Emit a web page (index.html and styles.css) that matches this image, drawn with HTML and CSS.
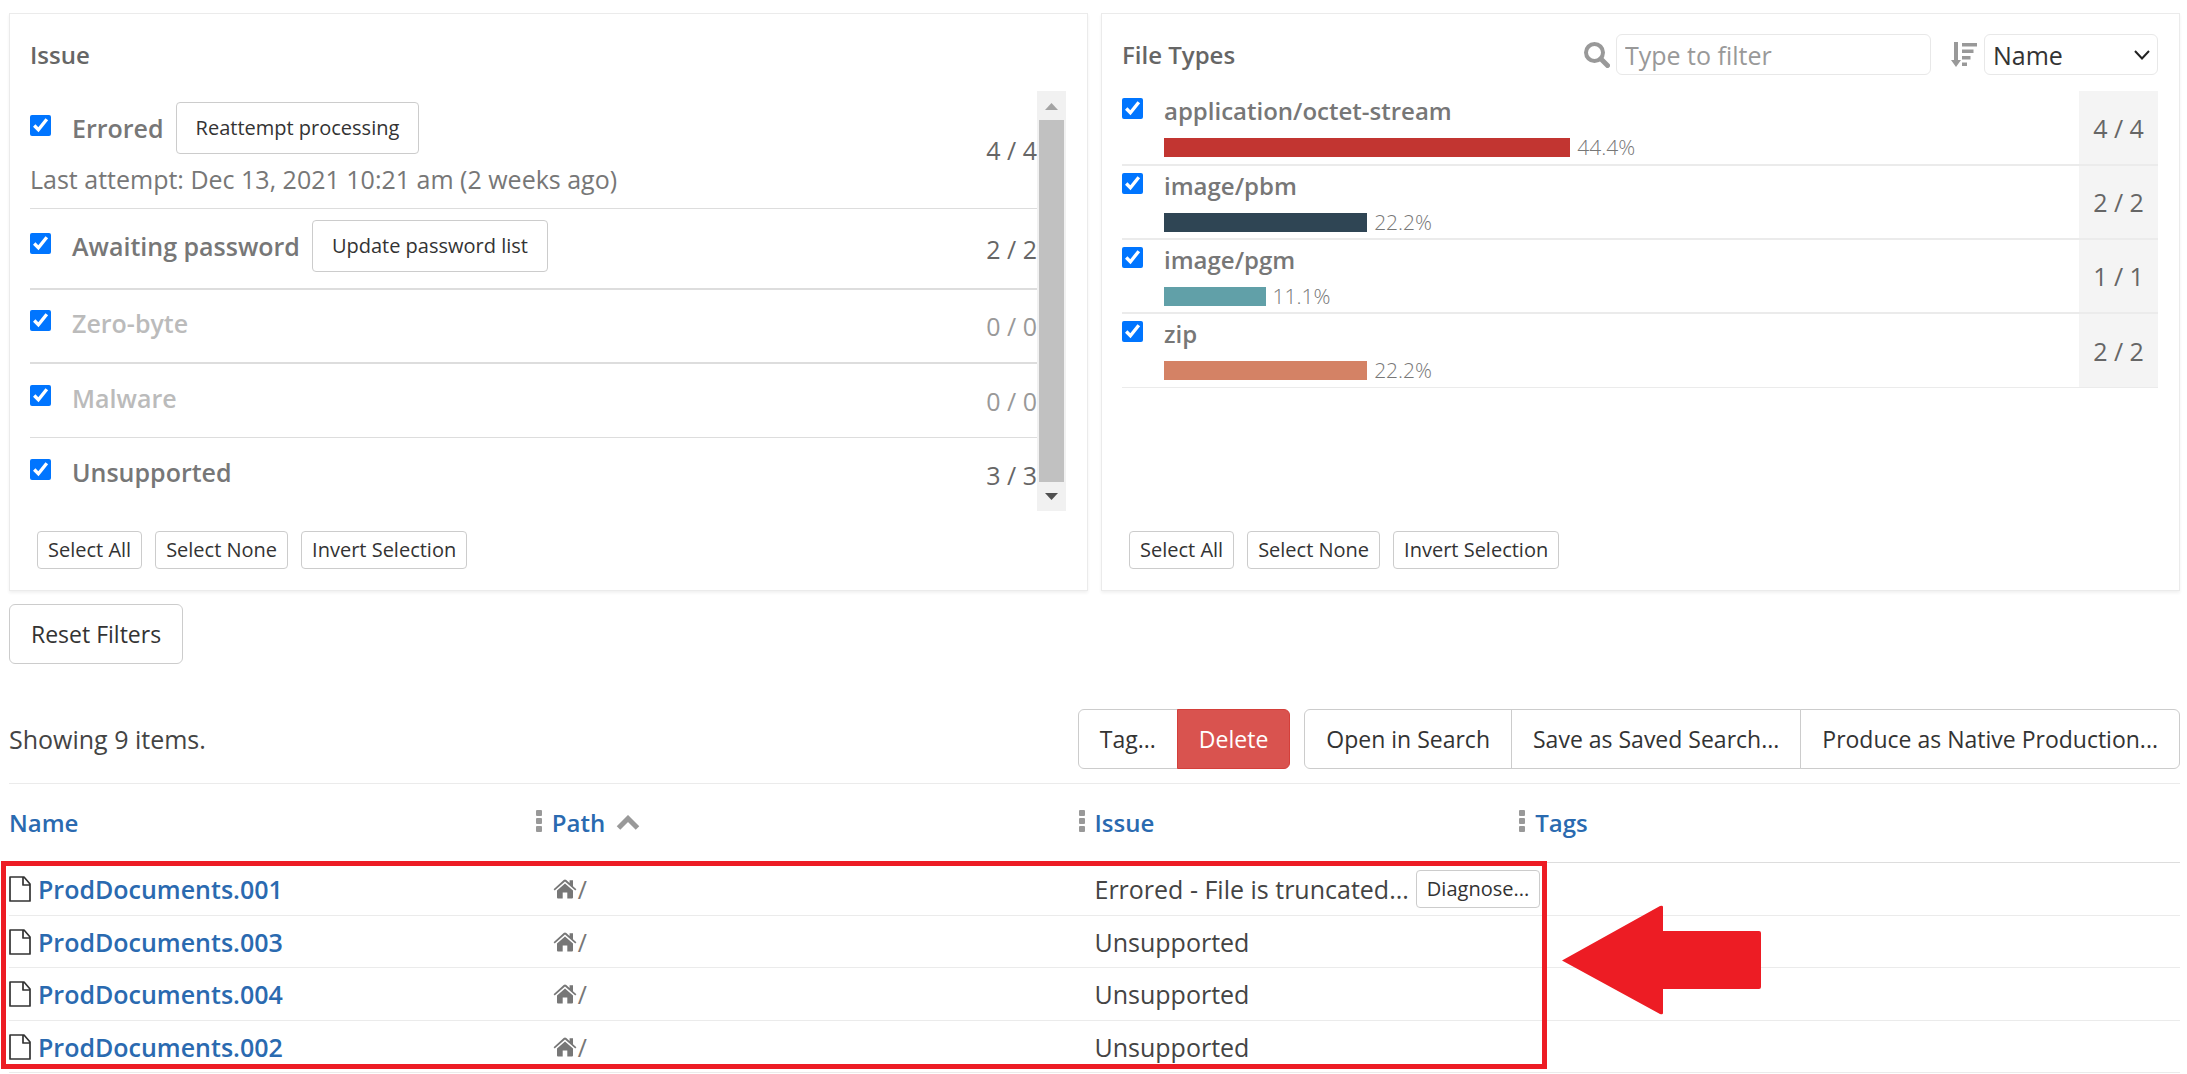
FILE: index.html
```html
<!DOCTYPE html>
<html lang="en">
<head>
    <meta charset="UTF-8">
    <meta name="viewport" content="width=device-width, initial-scale=1.0">
    <title>Processing issues</title>
    <link rel="stylesheet" href="styles.css">
</head>
<body>
    <!-- shared icons -->
    <svg class="sprite" aria-hidden="true">
        <symbol id="icon-file" viewBox="0 0 22 26">
            <path d="M1 1H15L21 8V25H1Z M14 1V9H21" fill="none" stroke="#333" stroke-width="1.7" stroke-linejoin="round"/>
        </symbol>
        <symbol id="icon-home" viewBox="0 0 24 20">
            <path d="M12 4.6L20 11.6V18.4Q20 19.4 19 19.4H14.3V13.4H9.7V19.4H5Q4 19.4 4 18.4V11.6Z"/>
            <path d="M0.6 10.2L10.7 1Q12 0 13.3 1L16.6 4V1.2H20V7.2L23.4 10.2L22.3 11.5L12 2.6L1.7 11.5Z"/>
        </symbol>
        <symbol id="icon-dots" viewBox="0 0 6 22">
            <rect width="6" height="6" rx="1"/>
            <rect y="8" width="6" height="6" rx="1"/>
            <rect y="16" width="6" height="6" rx="1"/>
        </symbol>
    </svg>

    <div class="filters">
        <section class="panel">
            <div class="panel-header">
                <h2 class="panel-title">Issue</h2>
            </div>
            <div class="panel-body issue-body">
                <ul class="issue-list">
                    <li class="issue-row">
                        <div class="issue-info">
                            <div class="issue-line">
                                <input type="checkbox" id="errored" checked>
                                <label for="errored">Errored</label>
                                <button type="button" class="btn btn-medium">Reattempt processing</button>
                            </div>
                            <div class="issue-note">Last attempt: Dec 13, 2021 10:21 am (2 weeks ago)</div>
                        </div>
                        <span class="count">4 / 4</span>
                    </li>
                    <li class="issue-row">
                        <div class="issue-line">
                            <input type="checkbox" id="password" checked>
                            <label for="password">Awaiting password</label>
                            <button type="button" class="btn btn-medium">Update password list</button>
                        </div>
                        <span class="count">2 / 2</span>
                    </li>
                    <li class="issue-row empty">
                        <div class="issue-line">
                            <input type="checkbox" id="zerobyte" checked>
                            <label for="zerobyte">Zero-byte</label>
                        </div>
                        <span class="count">0 / 0</span>
                    </li>
                    <li class="issue-row empty">
                        <div class="issue-line">
                            <input type="checkbox" id="malware" checked>
                            <label for="malware">Malware</label>
                        </div>
                        <span class="count">0 / 0</span>
                    </li>
                    <li class="issue-row">
                        <div class="issue-line">
                            <input type="checkbox" id="unsupported" checked>
                            <label for="unsupported">Unsupported</label>
                        </div>
                        <span class="count">3 / 3</span>
                    </li>
                </ul>
                <div class="scrollbar" aria-hidden="true">
                    <svg class="scroll-arrow" viewBox="0 0 29 29"><path d="M8 19L14.5 12L21 19Z" fill="#a3a3a3"/></svg>
                    <div class="scroll-thumb"></div>
                    <svg class="scroll-arrow" viewBox="0 0 29 29"><path d="M8 11L14.5 18L21 11Z" fill="#505050"/></svg>
                </div>
            </div>
            <div class="panel-footer">
                <button type="button" class="btn btn-small">Select All</button>
                <button type="button" class="btn btn-small">Select None</button>
                <button type="button" class="btn btn-small">Invert Selection</button>
            </div>
        </section>

        <section class="panel">
            <div class="panel-header">
                <h2 class="panel-title">File Types</h2>
                <div class="panel-tools">
                    <label for="typeFilter" aria-label="Filter file types">
                        <svg class="icon-search" viewBox="0 0 26 26" fill="none" stroke="#999"><circle cx="10.5" cy="10.5" r="8.5" stroke-width="4"/><path d="M17 17L23.5 23.5" stroke-width="5" stroke-linecap="round"/></svg>
                    </label>
                    <input type="text" id="typeFilter" class="field" placeholder="Type to filter">
                    <label for="typeSort" class="sort-label" aria-label="Sort by">
                        <svg class="icon-sort" viewBox="0 0 26 25" fill="#999"><path d="M3 0H7V18H10L5 25L0 18H3Z"/><path d="M11 1H26V4.5H11ZM11 7.5H22.5V11H11ZM11 14H19.5V17.5H11ZM11 20.5H16V24H11Z"/></svg>
                    </label>
                    <div class="select-wrap">
                        <select id="typeSort" class="field">
                            <option>Name</option>
                        </select>
                        <svg class="icon-chevron" viewBox="0 0 16 10"><path d="M1 1L8 8.5L15 1" fill="none" stroke="#222" stroke-width="2"/></svg>
                    </div>
                </div>
            </div>
            <div class="panel-body">
                <ul class="type-list">
                    <li class="type-row">
                        <input type="checkbox" id="octet" checked>
                        <div class="type-info">
                            <label for="octet">application/octet-stream</label>
                            <div class="bar-line"><span class="bar bar-red" style="width: 44.4%"></span><span class="percent">44.4%</span></div>
                        </div>
                        <span class="count">4 / 4</span>
                    </li>
                    <li class="type-row">
                        <input type="checkbox" id="pbm" checked>
                        <div class="type-info">
                            <label for="pbm">image/pbm</label>
                            <div class="bar-line"><span class="bar bar-navy" style="width: 22.2%"></span><span class="percent">22.2%</span></div>
                        </div>
                        <span class="count">2 / 2</span>
                    </li>
                    <li class="type-row">
                        <input type="checkbox" id="pgm" checked>
                        <div class="type-info">
                            <label for="pgm">image/pgm</label>
                            <div class="bar-line"><span class="bar bar-teal" style="width: 11.1%"></span><span class="percent">11.1%</span></div>
                        </div>
                        <span class="count">1 / 1</span>
                    </li>
                    <li class="type-row">
                        <input type="checkbox" id="zip" checked>
                        <div class="type-info">
                            <label for="zip">zip</label>
                            <div class="bar-line"><span class="bar bar-orange" style="width: 22.2%"></span><span class="percent">22.2%</span></div>
                        </div>
                        <span class="count">2 / 2</span>
                    </li>
                </ul>
            </div>
            <div class="panel-footer">
                <button type="button" class="btn btn-small">Select All</button>
                <button type="button" class="btn btn-small">Select None</button>
                <button type="button" class="btn btn-small">Invert Selection</button>
            </div>
        </section>
    </div>

    <button type="button" class="btn">Reset Filters</button>

    <div class="toolbar">
        <span>Showing 9 items.</span>
        <div class="toolbar-actions">
            <div class="btn-group">
                <button type="button" class="btn">Tag...</button>
                <button type="button" class="btn btn-danger">Delete</button>
            </div>
            <div class="btn-group">
                <button type="button" class="btn">Open in Search</button>
                <button type="button" class="btn">Save as Saved Search...</button>
                <button type="button" class="btn">Produce as Native Production...</button>
            </div>
        </div>
    </div>

    <div class="results">
        <table class="results-table">
            <thead>
                <tr>
                    <th class="col-name"><div class="th-inner"><a href="#">Name</a><svg class="icon-dots"><use href="#icon-dots"/></svg></div></th>
                    <th class="col-path"><div class="th-inner"><a href="#">Path</a><svg class="icon-up" viewBox="0 0 24 16"><path d="M2.5 13L12 3.5L21.5 13" fill="none" stroke="#999" stroke-width="5"/></svg><svg class="icon-dots"><use href="#icon-dots"/></svg></div></th>
                    <th class="col-issue"><div class="th-inner"><a href="#">Issue</a><svg class="icon-dots"><use href="#icon-dots"/></svg></div></th>
                    <th><div class="th-inner"><a href="#">Tags</a></div></th>
                </tr>
            </thead>
            <tbody>
                <tr>
                    <td><div class="cell"><svg class="icon-file"><use href="#icon-file"/></svg><a href="#">ProdDocuments.001</a></div></td>
                    <td><div class="cell path"><svg class="icon-home"><use href="#icon-home"/></svg>/</div></td>
                    <td><div class="cell issue-cell"><span>Errored - File is truncated...</span><button type="button" class="btn btn-small">Diagnose...</button></div></td>
                    <td></td>
                </tr>
                <tr>
                    <td><div class="cell"><svg class="icon-file"><use href="#icon-file"/></svg><a href="#">ProdDocuments.003</a></div></td>
                    <td><div class="cell path"><svg class="icon-home"><use href="#icon-home"/></svg>/</div></td>
                    <td>Unsupported</td>
                    <td></td>
                </tr>
                <tr>
                    <td><div class="cell"><svg class="icon-file"><use href="#icon-file"/></svg><a href="#">ProdDocuments.004</a></div></td>
                    <td><div class="cell path"><svg class="icon-home"><use href="#icon-home"/></svg>/</div></td>
                    <td>Unsupported</td>
                    <td></td>
                </tr>
                <tr>
                    <td><div class="cell"><svg class="icon-file"><use href="#icon-file"/></svg><a href="#">ProdDocuments.002</a></div></td>
                    <td><div class="cell path"><svg class="icon-home"><use href="#icon-home"/></svg>/</div></td>
                    <td>Unsupported</td>
                    <td></td>
                </tr>
            </tbody>
        </table>
        <!-- callout over the result rows -->
        <div class="callout-box"></div>
        <svg class="callout-arrow" viewBox="0 0 200 110"><path d="M1 55.5L99 1Q102 0 102 2V26H198Q200 26 200 28V82Q200 84 198 84H102V108Q102 110 99 109Z" fill="#ed1c24"/></svg>
    </div>
</body>
</html>
```

FILE: styles.css
```css
* {
    box-sizing: border-box;
}
body {
    margin: 0;
    padding: 13px 7px 0 9px;
    background: #fff;
    color: #444;
    font-family: "Open Sans", "Noto Sans", sans-serif;
    font-size: 25px;
    line-height: 34px;
}
ul {
    margin: 0;
    padding: 0;
    list-style: none;
}
a {
    color: #2a6ab0;
    font-weight: 600;
    text-decoration: none;
}
svg {
    display: block;
    flex: none;
}
.sprite {
    position: absolute;
    width: 0;
    height: 0;
}
input[type="checkbox"] {
    flex: none;
    width: 21px;
    height: 21px;
    margin: 0;
    accent-color: #0075ff;
}

/* buttons */
.btn {
    height: 60px;
    padding: 0 21px;
    border: 1px solid #ccc;
    border-radius: 6px;
    background: #fff;
    color: #333;
    font-family: inherit;
    font-size: 23px;
    line-height: 32px;
    white-space: nowrap;
    cursor: pointer;
}
.btn-medium {
    height: 52px;
    padding: 0 19px;
    border-radius: 4px;
    font-size: 20px;
    font-weight: 500;
}
.btn-small {
    height: 38px;
    padding: 0 10px;
    border-radius: 4px;
    font-size: 20px;
}
.btn-danger {
    border-color: #d43f3a;
    background: #d9534f;
    color: #fff;
    font-weight: 500;
}
.btn-group {
    display: flex;
}
.btn-group .btn + .btn {
    margin-left: -1px;
    border-top-left-radius: 0;
    border-bottom-left-radius: 0;
}
.btn-group .btn:not(:last-child) {
    border-top-right-radius: 0;
    border-bottom-right-radius: 0;
}

/* filter panels */
.filters {
    display: grid;
    grid-template-columns: 1fr 1fr;
    gap: 13px;
    margin-bottom: 13px;
}
.panel {
    border: 1px solid #ebebeb;
    box-shadow: 0 2px 3px rgba(0, 0, 0, 0.06);
    padding: 20px 21px 21px 20px;
}
.panel-header {
    display: flex;
    justify-content: space-between;
    align-items: center;
    height: 41px;
    margin-bottom: 16px;
}
.panel-title {
    margin: 0;
    color: #666;
    font-size: 24px;
    font-weight: 600;
}
.panel-tools {
    display: flex;
    align-items: center;
}
.field {
    height: 41px;
    border: 1px solid #e8e8e8;
    border-radius: 6px;
    background: #fff;
    color: #333;
    font-family: inherit;
    font-size: 25px;
}
input.field {
    width: 315px;
    margin-left: 6px;
    padding: 0 8px;
}
input.field::placeholder {
    color: #999;
}
select.field {
    width: 174px;
    padding: 0 8px;
    appearance: none;
}
.select-wrap {
    display: grid;
    align-items: center;
    margin-left: 7px;
}
.select-wrap > * {
    grid-area: 1 / 1;
}
.icon-chevron {
    justify-self: end;
    width: 16px;
    height: 10px;
    margin-right: 8px;
    pointer-events: none;
}
.sort-label {
    margin-left: 20px;
}
.icon-search {
    width: 26px;
    height: 26px;
}
.icon-sort {
    width: 26px;
    height: 25px;
}
.panel-body {
    height: 420px;
    margin-bottom: 20px;
}
.panel-footer {
    display: flex;
    gap: 13px;
    padding-left: 7px;
}
.count {
    color: #666;
    white-space: nowrap;
}

/* issue list */
.issue-body {
    display: flex;
}
.issue-list {
    flex: 1;
}
.issue-row {
    display: flex;
    justify-content: space-between;
    align-items: center;
    height: 74px;
    border-bottom: 1px solid #ddd;
    color: #777;
}
.issue-row:nth-child(1) {
    height: 118px;
}
.issue-row:nth-child(2) {
    height: 81px;
}
.issue-row:nth-child(2),
.issue-row:nth-child(3) {
    border-bottom-width: 2px;
}
.issue-row:last-child {
    border-bottom: 0;
}
.issue-line {
    display: flex;
    align-items: center;
    padding-bottom: 6px;
}
.issue-line input[type="checkbox"] {
    margin-bottom: 5px;
}
.issue-line label {
    margin: 0 12px 0 21px;
    font-weight: 600;
}
.issue-note {
    line-height: 38px;
}
.empty label {
    color: #bbb;
}
.empty .count {
    color: #999;
}
.scrollbar {
    display: flex;
    flex-direction: column;
    width: 29px;
    background: #f1f1f1;
}
.scroll-arrow {
    width: 29px;
    height: 29px;
}
.scroll-thumb {
    flex: 1;
    margin: 0 2px;
    background: #c1c1c1;
}

/* file type list */
.type-row {
    display: flex;
    height: 74px;
    border-bottom: 2px solid #ebebeb;
}
.type-row:first-child {
    height: 75px;
}
.type-row:last-child {
    border-bottom-width: 1px;
}
.type-row input {
    margin-top: 7px;
}
.type-row .count {
    display: flex;
    align-items: center;
    justify-content: center;
    width: 79px;
    background: #f4f4f4;
}
.type-info {
    flex: 1;
    margin-left: 21px;
}
.type-info label {
    display: block;
    height: 46px;
    line-height: 40px;
    color: #777;
    font-size: 24px;
    font-weight: 600;
}
.bar-line {
    display: flex;
    align-items: center;
    gap: 7px;
    height: 20px;
}
.bar {
    height: 19px;
}
.bar-red {
    background: #c23531;
}
.bar-navy {
    background: #2f4554;
}
.bar-teal {
    background: #61a0a8;
}
.bar-orange {
    background: #d48265;
}
.percent {
    color: #777;
    font-size: 21px;
    font-weight: 300;
}

/* toolbar */
.toolbar {
    display: flex;
    justify-content: space-between;
    align-items: center;
    margin-top: 45px;
    padding-bottom: 14px;
}
.toolbar-actions {
    display: flex;
    gap: 14px;
}

/* results */
.results {
    position: relative;
    border-top: 1px solid #ebebeb;
}
.results-table {
    width: 100%;
    table-layout: fixed;
    border-collapse: separate;
    border-spacing: 0;
}
.results-table th,
.results-table td {
    height: 52px;
    padding: 0;
    border-bottom: 1px solid #ebebeb;
    text-align: left;
}
.results-table tr:nth-child(odd) td {
    height: 53px;
}
.results-table th {
    height: 79px;
    border-bottom-color: #ddd;
}
.col-name,
.col-path {
    width: 25%;
}
.col-issue {
    width: 20.3%;
}
.th-inner {
    display: flex;
    align-items: center;
}
.th-inner a {
    font-size: 24px;
}
.icon-dots {
    width: 6px;
    height: 22px;
    margin: 0 10px 4px auto;
    fill: #999;
}
.icon-up {
    width: 24px;
    height: 16px;
    margin-left: 11px;
}
.cell {
    display: flex;
    align-items: center;
}
.icon-file {
    width: 22px;
    height: 26px;
    margin-right: 7px;
}
.path {
    color: #777;
}
.icon-home {
    width: 24px;
    height: 20px;
    margin: 0 1px;
    fill: #777;
}
.issue-cell {
    gap: 7px;
    white-space: nowrap;
}

.callout-box {
    position: absolute;
    top: 77px;
    bottom: 4px;
    left: -8px;
    width: 71.2%;
    border: 5px solid #ed1c24;
    pointer-events: none;
}
.callout-arrow {
    position: absolute;
    top: 121px;
    left: 71.5%;
    width: 200px;
    height: 110px;
}
```
